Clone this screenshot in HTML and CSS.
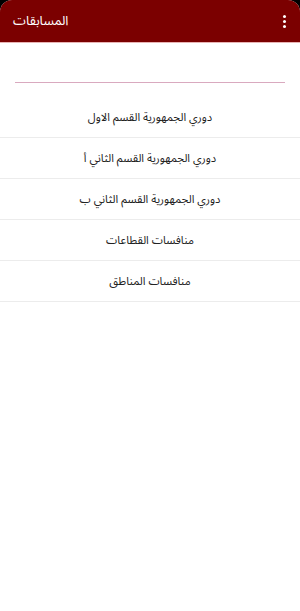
FILE: index.html
```html
<!DOCTYPE html>
<html lang="ar">
<head>
<meta charset="utf-8">
<link rel="stylesheet" href="styles.css">
</head>
<body>
<div class="app">
  <header class="bar">
    <span class="title" dir="rtl">المسابقات</span>
    <span class="menu"><i></i><i></i><i></i></span>
  </header>
  <div class="search"><div class="field"></div></div>
  <ul class="list" dir="rtl">
    <li>دوري الجمهورية القسم الاول</li>
    <li>دوري الجمهورية القسم الثاني أ</li>
    <li>دوري الجمهورية القسم الثاني ب</li>
    <li>منافسات القطاعات</li>
    <li>منافسات المناطق</li>
  </ul>
</div>
</body>
</html>
```
FILE: styles.css
```css
html, body { margin: 0; padding: 0; background: #000; }
body { font-family: "Noto Sans Arabic", "DejaVu Sans", sans-serif; }
.app {
  width: 300px;
  min-height: 611px;
  background: #fff;
  border-radius: 12px 12px 0 0;
  overflow: hidden;
}
.bar {
  height: 42px;
  background: #7b0000;
  border-bottom: 1px solid #e8b4b4;
  display: flex;
  align-items: center;
  justify-content: space-between;
  padding: 0 14px 0 13px;
}
.title { color: #fff; font-size: 13px; }
.menu { display: flex; flex-direction: column; gap: 2px; }
.menu i { display: block; width: 3px; height: 3px; background: #fff; border-radius: 50%; }
.search { padding: 39px 15px 0; height: 54px; box-sizing: border-box; }
.field { height: 1px; background: #d9a9bf; }
.list { list-style: none; margin: 0; padding: 0; }
.list li {
  height: 40px;
  border-bottom: 1px solid #ececec;
  display: flex;
  align-items: center;
  justify-content: center;
  font-size: 11.3px;
  color: #222;
}
```
